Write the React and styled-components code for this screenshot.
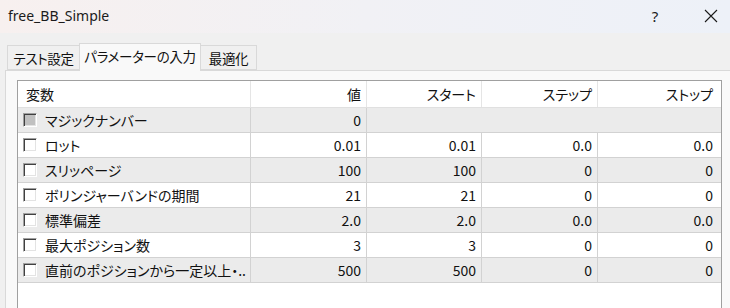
import styled, { createGlobalStyle } from "styled-components";

const GlobalStyle = createGlobalStyle`
  html, body {
    margin: 0;
    padding: 0;
    background: #f0f0f0;
    overflow: hidden;
  }
  body {
    font-family: "Noto Sans", "Noto Sans CJK JP", sans-serif;
    color: #1a1a1a;
  }
`;

const params = [
  { name: "マジックナンバー", value: "0", locked: true },
  { name: "ロット", value: "0.01", start: "0.01", step: "0.0", stop: "0.0" },
  { name: "スリッページ", value: "100", start: "100", step: "0", stop: "0" },
  { name: "ボリンジャーバンドの期間", value: "21", start: "21", step: "0", stop: "0" },
  { name: "標準偏差", value: "2.0", start: "2.0", step: "0.0", stop: "0.0" },
  { name: "最大ポジション数", value: "3", start: "3", step: "0", stop: "0" },
  { name: "直前のポジションから一定以上・..", value: "500", start: "500", step: "0", stop: "0" },
];

function CloseIcon() {
  return (
    <svg width="14" height="14" viewBox="0 0 14 14">
      <path d="M1 1 L13 13 M13 1 L1 13" stroke="#1a1a1a" strokeWidth="1.1" fill="none" />
    </svg>
  );
}

export default function App() {
  return (
    <Window>
      <GlobalStyle />
      <TitleBar>
        <Title>free_BB_Simple</Title>
        <TitleButtons>
          <HelpButton>?</HelpButton>
          <CloseButton>
            <CloseIcon />
          </CloseButton>
        </TitleButtons>
      </TitleBar>

      <TabStrip>
        <Tab $w={73}>テスト設定</Tab>
        <Tab $w={122} $active>
          パラメーターの入力
        </Tab>
        <Tab $w={57}>最適化</Tab>
      </TabStrip>

      <Panel>
        <Grid>
          <HeaderRow>
            <HeadCell $left>変数</HeadCell>
            <HeadCell>値</HeadCell>
            <HeadCell>スタート</HeadCell>
            <HeadCell>ステップ</HeadCell>
            <HeadCell $last>ストップ</HeadCell>
          </HeaderRow>
          {params.map((p, i) => (
            <Row key={p.name} $alt={i % 2 === 0}>
              <NameCell>
                <Check $disabled={p.locked} />
                <span>{p.name}</span>
              </NameCell>
              <Cell>{p.value}</Cell>
              <Cell $blank={p.locked}>{p.start}</Cell>
              <Cell $blank={p.locked}>{p.step}</Cell>
              <Cell $blank={p.locked} $last>
                {p.stop}
              </Cell>
            </Row>
          ))}
        </Grid>
      </Panel>
    </Window>
  );
}

const Window = styled.div`
  width: 730px;
  height: 308px;
  display: flex;
  flex-direction: column;
  background: #f0f0f0;
`;

const TitleBar = styled.div`
  height: 33px;
  flex: none;
  display: flex;
  align-items: center;
  justify-content: space-between;
  padding-left: 8px;
  background: linear-gradient(90deg, #f7f0ef 0%, #f1f1f5 50%, #edf1f8 100%);
`;

const Title = styled.div`
  font-size: 14px;
  color: #1b1b1b;
  margin-top: -2px;
`;

const TitleButtons = styled.div`
  display: flex;
  align-items: center;
  height: 100%;
`;

const HelpButton = styled.div`
  width: 46px;
  text-align: center;
  font-size: 15px;
  color: #1a1a1a;
  margin-right: 14px;
  margin-top: -2px;
`;

const CloseButton = styled.div`
  width: 38px;
  display: flex;
  justify-content: center;
  margin-top: -2px;
`;

const TabStrip = styled.div`
  height: 37px;
  flex: none;
  display: flex;
  align-items: flex-end;
  padding-left: 7px;
`;

const Tab = styled.div`
  width: ${({ $w }) => $w}px;
  box-sizing: border-box;
  height: ${({ $active }) => ($active ? 28 : 25)}px;
  margin-bottom: ${({ $active }) => ($active ? -1 : 0)}px;
  background: ${({ $active }) => ($active ? "#f9f9f9" : "#f0f0f0")};
  border: 1px solid #d9d9d9;
  border-bottom: ${({ $active }) => ($active ? "none" : "1px solid #d9d9d9")};
  margin-left: ${({ $active }) => ($active ? "-1px" : "0")};
  margin-right: ${({ $active }) => ($active ? "-1px" : "0")};
  position: relative;
  z-index: ${({ $active }) => ($active ? 1 : 0)};
  font-family: "Noto Sans CJK JP", sans-serif;
  font-feature-settings: "palt";
  font-size: 13.5px;
  letter-spacing: -0.3px;
  color: #111111;
  white-space: nowrap;
  display: flex;
  align-items: center;
  justify-content: center;
  padding-bottom: ${({ $active }) => ($active ? 3 : 0)}px;
`;

const Panel = styled.div`
  flex: 1;
  margin-left: 5px;
  background: #f9f9f9;
  border-top: 1px solid #d9d9d9;
  border-left: 1px solid #d9d9d9;
  padding: 9px 0 0 11px;
  min-height: 0;
`;

const Grid = styled.div`
  width: 705px;
  box-sizing: border-box;
  height: 100%;
  background: #ffffff;
  border: 1px solid #a0a0a0;
  border-bottom: none;
  font-family: "Noto Sans CJK JP", sans-serif;
  font-feature-settings: "palt";
  font-size: 14px;
  color: #111111;
`;

const columns = "233px 116px 115px 116px 122px";

const HeaderRow = styled.div`
  display: grid;
  grid-template-columns: ${columns};
  height: 27px;
  box-sizing: border-box;
  border-bottom: 1px solid #e0e0e0;
  background: #ffffff;
`;

const HeadCell = styled.div`
  display: flex;
  align-items: center;
  justify-content: ${({ $left }) => ($left ? "flex-start" : "flex-end")};
  padding: 0 ${({ $last }) => ($last ? 7 : 5)}px 1px 8px;
  border-right: ${({ $last }) => ($last ? "none" : "1px solid #e5e5e5")};
`;

const Row = styled.div`
  display: grid;
  grid-template-columns: ${columns};
  height: 25px;
  box-sizing: border-box;
  border-bottom: 1px solid #d2d2d2;
  background: ${({ $alt }) => ($alt ? "#ebebeb" : "#ffffff")};
`;

const NameCell = styled.div`
  display: flex;
  align-items: center;
  gap: 8px;
  padding-left: 5px;
  border-right: 1px solid #d2d2d2;
  white-space: nowrap;
  overflow: hidden;
`;

const Check = styled.span`
  display: block;
  width: 14px;
  height: 14px;
  flex: none;
  box-sizing: border-box;
  border: 1px solid;
  border-color: #a0a0a0 #ffffff #ffffff #a0a0a0;
  box-shadow: inset 1px 1px 0 #404040, inset -1px -1px 0 #e3e3e3;
  background: ${({ $disabled }) => ($disabled ? "#c0c0c0" : "#ffffff")};
  margin-top: -1px;
`;

const Cell = styled.div`
  display: flex;
  align-items: center;
  justify-content: flex-end;
  padding-right: ${({ $last }) => ($last ? 7 : 5)}px;
  border-right: ${({ $last, $blank }) =>
    $last || $blank ? "none" : "1px solid #d2d2d2"};
`;
